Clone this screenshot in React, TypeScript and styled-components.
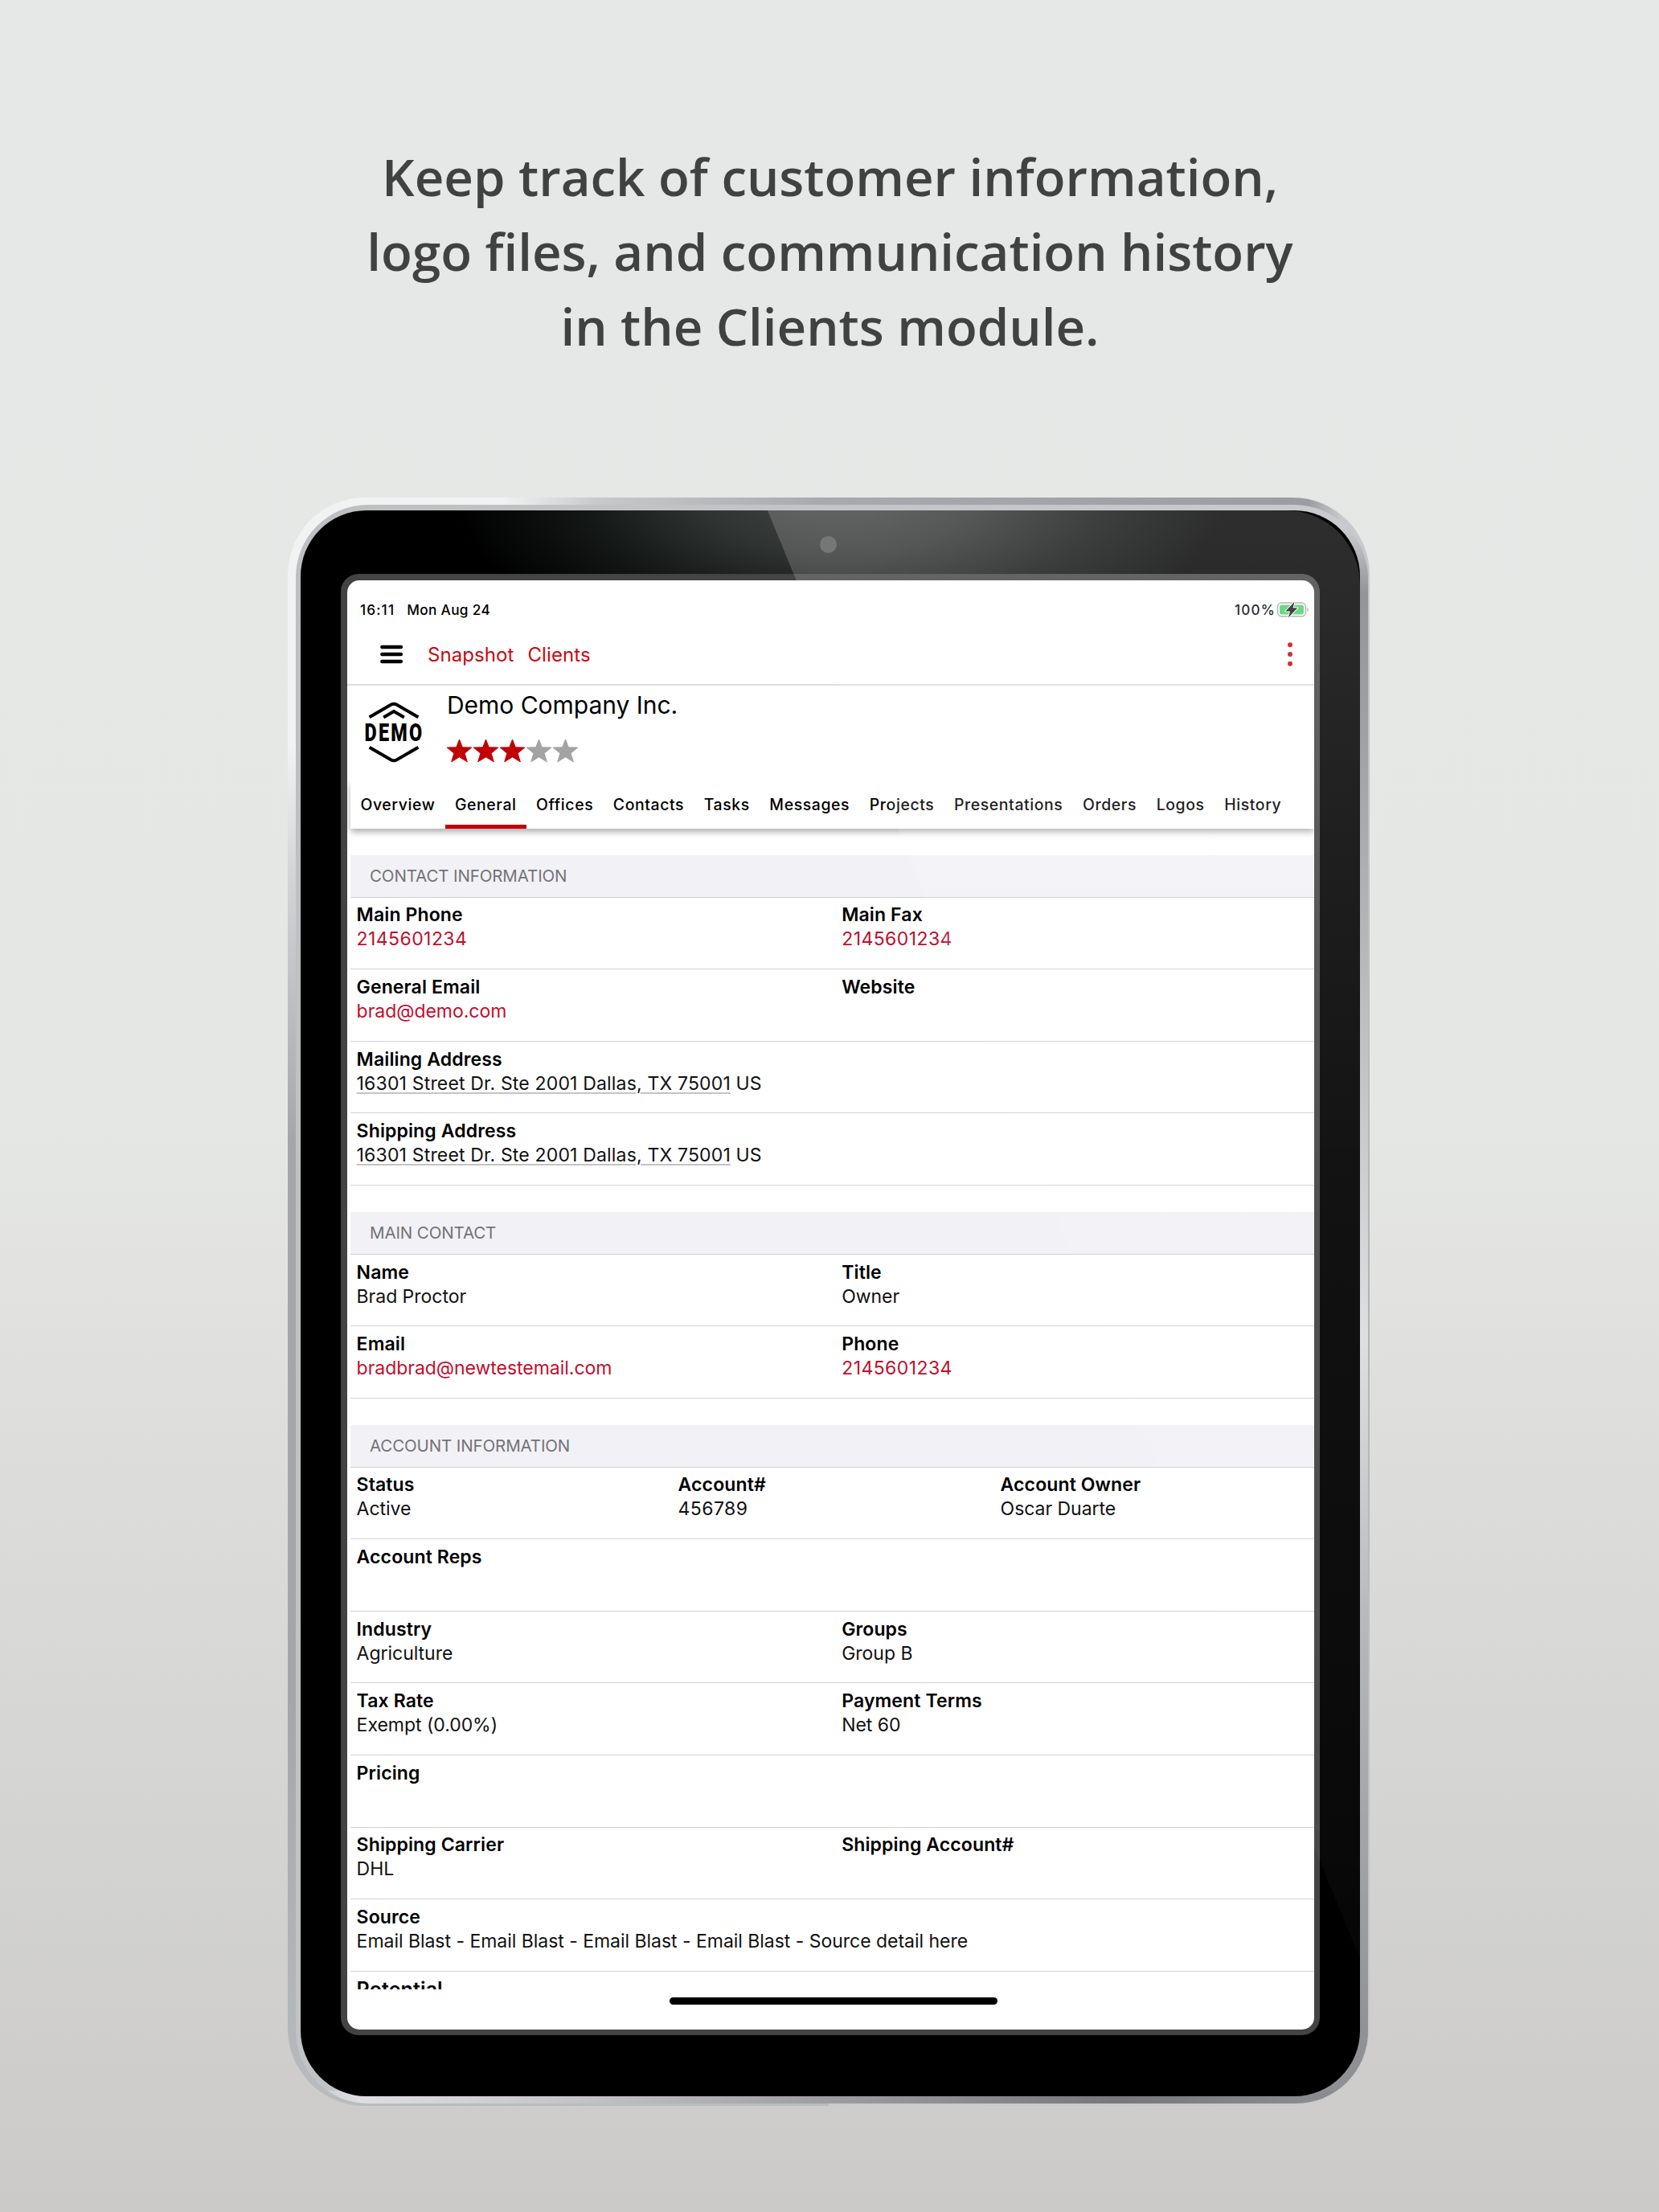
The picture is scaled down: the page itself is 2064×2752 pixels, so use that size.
import React from "react"
import styled, { createGlobalStyle } from "styled-components"

interface Field {
  label: string
  value?: string
  kind?: "link" | "address"
  large?: boolean
}

interface SectionData {
  title: string
  rows: Field[][]
}

const tabs = [
  "Overview",
  "General",
  "Offices",
  "Contacts",
  "Tasks",
  "Messages",
  "Projects",
  "Presentations",
  "Orders",
  "Logos",
  "History",
]

const sections: SectionData[] = [
  {
    title: "CONTACT INFORMATION",
    rows: [
      [
        { label: "Main Phone", value: "2145601234", kind: "link" },
        { label: "Main Fax", value: "2145601234", kind: "link" },
      ],
      [
        { label: "General Email", value: "brad@demo.com", kind: "link" },
        { label: "Website" },
      ],
      [
        {
          label: "Mailing Address",
          value: "16301 Street Dr. Ste 2001 Dallas, TX 75001",
          kind: "address",
        },
      ],
      [
        {
          label: "Shipping Address",
          value: "16301 Street Dr. Ste 2001 Dallas, TX 75001",
          kind: "address",
        },
      ],
    ],
  },
  {
    title: "MAIN CONTACT",
    rows: [
      [
        { label: "Name", value: "Brad Proctor" },
        { label: "Title", value: "Owner" },
      ],
      [
        { label: "Email", value: "bradbrad@newtestemail.com", kind: "link" },
        { label: "Phone", value: "2145601234", kind: "link" },
      ],
    ],
  },
  {
    title: "ACCOUNT INFORMATION",
    rows: [
      [
        { label: "Status", value: "Active" },
        { label: "Account#", value: "456789" },
        { label: "Account Owner", value: "Oscar Duarte" },
      ],
      [{ label: "Account Reps" }],
      [
        { label: "Industry", value: "Agriculture" },
        { label: "Groups", value: "Group B" },
      ],
      [
        { label: "Tax Rate", value: "Exempt (0.00%)" },
        { label: "Payment Terms", value: "Net 60" },
      ],
      [{ label: "Pricing" }],
      [
        { label: "Shipping Carrier", value: "DHL" },
        { label: "Shipping Account#" },
      ],
      [
        {
          label: "Source",
          value:
            "Email Blast - Email Blast - Email Blast - Email Blast - Source detail here",
        },
      ],
      [{ label: "Potential", large: true }],
    ],
  },
]

const BatteryIcon = () => (
  <svg width="41" height="22" viewBox="0 0 41 22">
    <rect x="1.6" y="3" width="34.8" height="16.8" rx="4.8" fill="none" stroke="#a6a6a8" strokeWidth="1.5" />
    <rect x="4" y="5.4" width="30" height="12" rx="2.6" fill="#4fd06f" />
    <path d="M38.4 8.4c2 .8 2 5 0 5.8z" fill="#a6a6a8" />
    <path
      d="M22.6 1.4 11.4 13.6h5.6l-2.2 7.8L26.3 9.2h-5.8z"
      fill="#1c1c20"
      stroke="#fff"
      strokeWidth="2"
      paintOrder="stroke"
      strokeLinejoin="round"
    />
  </svg>
)

const MenuIcon = () => (
  <svg width="28" height="26" viewBox="0 0 28 26">
    <g stroke="#000" strokeWidth="4.6" strokeLinecap="round">
      <path d="M2.4 4h23.4M2.4 13h23.4M2.4 22h23.4" />
    </g>
  </svg>
)

const MoreIcon = () => (
  <svg width="8" height="32" viewBox="0 0 8 32" fill="#c80a0f">
    <circle cx="4" cy="4.2" r="3" />
    <circle cx="4" cy="16" r="3" />
    <circle cx="4" cy="27.8" r="3" />
  </svg>
)

const DemoLogo = () => (
  <svg width="100" height="100" viewBox="0 0 100 100">
    <g fill="none" stroke="#000" strokeWidth="4">
      <path d="M19.6 32.2 46.8 16.6q3.2-1.7 6.4 0L80.4 32.2" />
      <path d="M37.2 32.4 50 25l12.8 7.4" />
      <path d="M19.6 69.8 46.8 85.4q3.2 1.7 6.4 0L80.4 69.8" />
    </g>
    <text
      transform="translate(13.6 62.4) scale(0.755 1)"
      fontFamily="Roboto, sans-serif"
      fontWeight="900"
      fontSize="31"
      letterSpacing="3"
    >
      DEMO
    </text>
  </svg>
)

const Star = ({ filled }: { filled: boolean }) => (
  <svg width="33" height="30" viewBox="0 0 33 30">
    <path
      d="M16.5 1 20.3 10.8 31.8 11 23.1 18.2 26.3 28.8 16.5 22.8 6.7 28.8 9.9 18.2 1.2 11 12.7 10.8z"
      fill={filled ? "#c00006" : "#a3a3a3"}
      stroke={filled ? "#c00006" : "#a3a3a3"}
      strokeLinejoin="round"
    />
  </svg>
)

const FieldRow: React.FC<{ fields: Field[] }> = ({ fields }) => (
  <Row $columns={fields.length}>
    {fields.map(({ label, value, kind, large }) => (
      <Cell key={label}>
        <Label $large={large}>{label}</Label>
        {kind === "address" ? (
          <Value $tracking={0.17}>
            <Address>{value}</Address> US
          </Value>
        ) : (
          <Value
            $link={kind === "link"}
            $tracking={/^\d+$/.test(value ?? "") ? 0.42 : -0.03}
          >
            {value}
          </Value>
        )}
      </Cell>
    ))}
  </Row>
)

const App: React.FC = () => {
  return (
    <Page>
      <GlobalStyle />
      <Headline>
        Keep track of customer information,
        <br />
        logo files, and communication history
        <br />
        in the Clients module.
      </Headline>
      <Body>
        <Rim>
          <Bezel>
            <Camera />
            <ScreenFrame>
              <Screen>
                <StatusBar>
                  <Digits>16:11</Digits>
                  <span>Mon Aug 24</span>
                  <BatteryStatus>
                    <Digits>100%</Digits>
                    <BatteryIcon />
                  </BatteryStatus>
                </StatusBar>
                <NavBar>
                  <MenuIcon />
                  <NavLink>Snapshot</NavLink>
                  <NavLink>Clients</NavLink>
                  <MoreIcon />
                </NavBar>
                <ClientHeader>
                  <DemoLogo />
                  <div>
                    <ClientName>Demo Company Inc.</ClientName>
                    <Rating>
                      {[1, 2, 3, 4, 5].map(n => (
                        <Star key={n} filled={n <= 3} />
                      ))}
                    </Rating>
                  </div>
                </ClientHeader>
                <TabBar>
                  {tabs.map(tab => (
                    <Tab key={tab} $active={tab === "General"}>
                      {tab}
                    </Tab>
                  ))}
                </TabBar>
                <Content>
                  {sections.map(({ title, rows }) => (
                    <section key={title}>
                      <SectionTitle>{title}</SectionTitle>
                      {rows.map(fields => (
                        <FieldRow key={fields[0].label} fields={fields} />
                      ))}
                    </section>
                  ))}
                </Content>
                <HomeIndicator />
              </Screen>
            </ScreenFrame>
            <Glare />
          </Bezel>
        </Rim>
      </Body>
    </Page>
  )
}

export default App

const GlobalStyle = createGlobalStyle`
  * {
    box-sizing: border-box;
  }

  body {
    margin: 0;
  }
`

const Page = styled.main`
  width: 2064px;
  height: 2752px;
  overflow: hidden;
  padding-top: 173px;
  background: linear-gradient(
    to bottom,
    #e5e8e6 0,
    #e5e7e5 1400px,
    #dddddc 1800px,
    #d3d3d1 2300px,
    #cecdcb 2600px,
    #cbcac8 2752px
  );
`

const Headline = styled.h1`
  margin: 0;
  height: 446px;
  padding-left: 1px;
  color: #414141;
  font: 600 63.6px/93px "Open Sans", sans-serif;
  text-align: center;
`

// Device

const Body = styled.div`
  width: 1346px;
  height: 2001px;
  margin-left: 358px;
  padding: 9px 2px 3px 10px;
  border-radius: 96px;
  background:
    linear-gradient(
      to right,
      #f1f3f2 0,
      #f1f3f2 268px,
      #c8c9cb 385px,
      #a9aaad 660px,
      #9b9da0 1270px,
      #c8c9cc 1310px
    ) 0 0 / 100% 70px no-repeat,
    linear-gradient(
      to bottom,
      #f1f3f2 0,
      #f1f3f2 310px,
      #d5d6d8 460px,
      #a5a6aa 800px,
      #a5a6aa 1500px,
      #b4b7ba 1900px,
      #b9bcbf 2001px
    ) 0 0 / 50% 100% no-repeat,
    linear-gradient(to bottom, #c8c9cc, #b0b3b6 50%, #c8cacd);
`

const Rim = styled.div`
  height: 100%;
  padding: 7px 10px 9px 6px;
  border-radius: 90px 92px 90px 90px;
  background:
    linear-gradient(to right, #bcbec0, #c9cacd) 0 0 / 100% 8px no-repeat,
    linear-gradient(
      to right,
      #bfc4c6 0,
      #dedee1 80px,
      #c4c4c7 350px,
      #a2a2a5 620px,
      #78787c 1020px,
      #8a8b8e 1260px
    ) 0 100% / 100% 16px no-repeat,
    linear-gradient(#bdbfc2, #c0c4c6) 0 0 / 50% 100% no-repeat,
    linear-gradient(
      to bottom,
      #c9cacd 30px,
      #939498 110px,
      #a5a6a9 350px,
      #b7b8ba 560px,
      #d0d1d3 870px,
      #dedfe1 1038px,
      #cfd1d3 1170px,
      #b4b5b9 1420px,
      #a0a1a5 1700px,
      #8f9094 1920px
    );
`

const Bezel = styled.div`
  position: relative;
  height: 1973px;
  padding: 79px 50px 0;
  border-radius: 82px;
  background: radial-gradient(
      ellipse 480px 210px at 670px -20px,
      #424645 0,
      #303433 35%,
      #121615 68%,
      #000 100%
    )
    #000;
`

const Camera = styled.div`
  position: absolute;
  top: 32px;
  left: 646px;
  width: 21px;
  height: 21px;
  border-radius: 50%;
  background: #585a5a;
`

const Glare = styled.div`
  position: absolute;
  inset: 0;
  pointer-events: none;
  border-top-right-radius: 92px;
  clip-path: polygon(581px 0, 100% 0, 100% 1802px);
  background: linear-gradient(
    to bottom,
    rgba(255, 255, 255, 0.18) 0,
    rgba(255, 255, 255, 0.12) 415px,
    rgba(255, 255, 255, 0.07) 845px,
    rgba(255, 255, 255, 0.035) 1665px,
    rgba(255, 255, 255, 0.025) 1802px
  );
`

const ScreenFrame = styled.div`
  height: 1818px;
  padding: 8px 7px 7px 8px;
  border-radius: 22px;
  background: #434343;
`

const Screen = styled.div`
  display: flex;
  flex-direction: column;
  height: 100%;
  overflow: hidden;
  border-radius: 15px;
  background: #fff;
  color: #000;
  font-family: Inter, sans-serif;
`

// App

const StatusBar = styled.div`
  display: flex;
  align-items: center;
  flex: none;
  gap: 15px;
  height: 55px;
  padding: 17px 6px 0 16px;
  font-size: 17.2px;
  font-weight: 500;
  letter-spacing: 0.35px;
`

const Digits = styled.span`
  letter-spacing: 1.15px;
`

const BatteryStatus = styled.div`
  display: flex;
  align-items: center;
  gap: 1px;
  margin-left: auto;
`

const NavBar = styled.nav`
  display: flex;
  align-items: center;
  flex: none;
  height: 76px;
  padding: 0 26px 0 41px;
  border-bottom: 2px solid #dcdcde;

  > svg:first-child {
    margin-right: 31px;
  }

  > svg:last-child {
    margin-left: auto;
  }
`

const NavLink = styled.a`
  margin-right: 17px;
  color: #c80a0f;
  font-size: 24px;
  letter-spacing: 0.08px;
`

const ClientHeader = styled.header`
  display: flex;
  flex: none;
  gap: 16px;
  height: 119px;
  padding: 7px 0 0 8px;
`

const ClientName = styled.h2`
  margin: -1px 0 0;
  font-size: 30px;
  font-weight: 400;
  line-height: 36px;
  letter-spacing: -0.03px;
`

const Rating = styled.div`
  display: flex;
  margin: 24px 0 0 -1px;
`

const TabBar = styled.div`
  display: flex;
  flex: none;
  height: 59px;
  margin-left: 4px;
  background: #fff;
  box-shadow: 0 4px 8px rgba(0, 0, 0, 0.32);
  clip-path: inset(0 0 -20px -10px);
`

const Tab = styled.div<{ $active: boolean }>`
  padding: 0 12.2px 0 12.4px;
  border-bottom: 5px solid ${({ $active }) => ($active ? "#c00006" : "transparent")};
  font-size: 19.4px;
  font-weight: 500;
  line-height: 59px;
  letter-spacing: 0.62px;
`

const Content = styled.div`
  flex: none;
  height: 1444px;
  margin-left: 4px;
  overflow: hidden;
`

const SectionTitle = styled.h3`
  margin: 32.7px 0 0;
  padding-left: 24px;
  border-bottom: 1px solid #d0d0d4;
  background: #f2f1f6;
  color: #737377;
  font-size: 20.5px;
  font-weight: 400;
  line-height: 52px;
  letter-spacing: -0.12px;
`

const Row = styled.div<{ $columns: number }>`
  display: grid;
  grid-template-columns: ${({ $columns }) =>
    $columns === 3
      ? "400px 401px 1fr"
      : $columns === 2
        ? "603.6px 1fr"
        : "1fr"};
  height: 89.6px;
  padding: 6.8px 0 0 7.6px;
  border-bottom: 1px solid #d2d2d4;
`

const Cell = styled.div`
  font-size: 23px;
  line-height: 30px;
  white-space: nowrap;
`

const Label = styled.div<{ $large?: boolean }>`
  font-size: ${({ $large }) => ($large ? "25px" : "23px")};
  font-weight: 600;
  letter-spacing: 0.12px;
`

const Value = styled.div<{ $link?: boolean; $tracking: number }>`
  color: ${({ $link }) => ($link ? "#c00f2c" : "#111")};
  letter-spacing: ${({ $tracking }) => $tracking}px;
`

const Address = styled.span`
  text-decoration: underline;
  text-decoration-color: #c4c4c4;
  text-decoration-thickness: 2px;
  text-underline-offset: 3px;
`

const HomeIndicator = styled.div`
  flex: none;
  width: 408px;
  height: 9px;
  margin: 10px 0 0 401px;
  border-radius: 5px;
  background: #000;
`
